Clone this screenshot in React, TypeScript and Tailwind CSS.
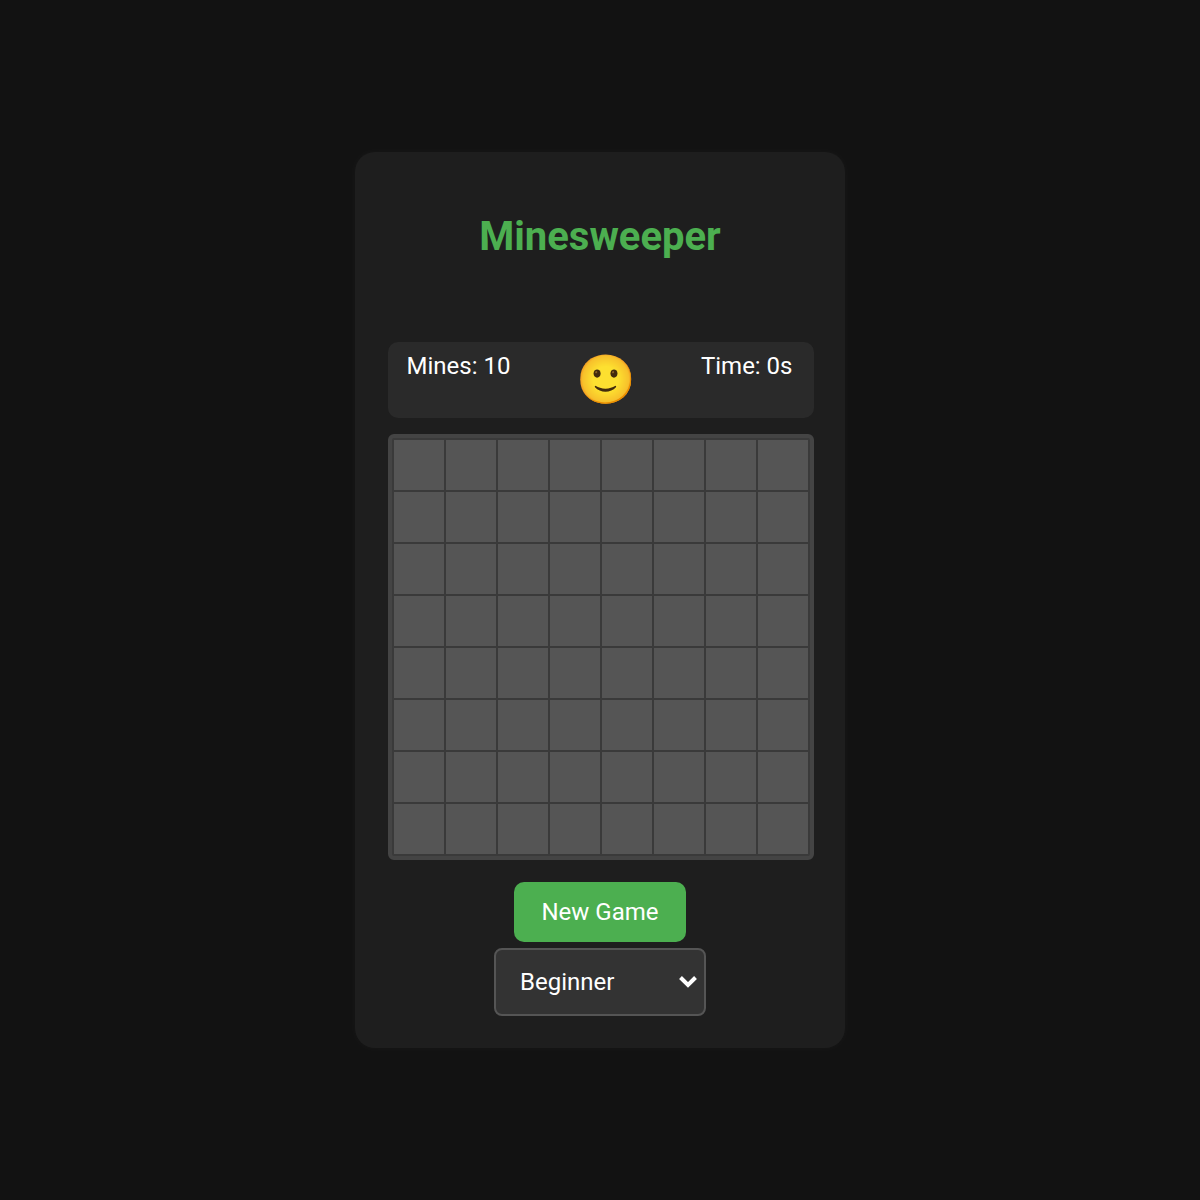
import React from "react";

const cells = Array.from({ length: 64 });

export default function App() {
  return (
    <div className="min-h-[1200px] bg-[#121212] flex items-center justify-center font-['Roboto',sans-serif] text-white">
      <div className="w-[490px] h-[896px] bg-[#1e1e1e] rounded-[20px] shadow-[0_0_10px_rgba(255,255,255,0.03)] px-[32px] pt-[32px] flex flex-col items-center">
        <h1 className="mt-[29px] text-[40px] leading-[47px] font-bold text-[#4caf50]">Minesweeper</h1>
        <div className="mt-[82px] ml-[1px] w-[426px] h-[76px] bg-[#2a2a2a] rounded-[10px] pl-[19px] pr-[21px] pt-[9px] flex justify-between items-start text-[24px] leading-[30px]">
          <span>Mines: 10</span>
          <span className="text-[48px] leading-[56px] mt-[1px] ml-[2px] font-['Noto_Color_Emoji','Roboto',sans-serif]">🙂</span>
          <span>Time: 0s</span>
        </div>
        <div className="mt-[16px] ml-[1px] w-[426px] h-[426px] bg-[#3a3a3a] border-[4px] border-[#444444] rounded-[6px] grid grid-cols-8 gap-[2px] p-[2px]">
          {cells.map((_, i) => (
            <div key={i} className="bg-[#555555]" />
          ))}
        </div>
        <button className="mt-[22px] w-[172px] h-[60px] bg-[#4caf50] rounded-[10px] text-[24px]">New Game</button>
        <div className="mt-[6px] relative w-[212px] h-[68px] bg-[#333333] border-2 border-[#555555] rounded-[8px] text-[24px] pl-[24px] flex items-center">
          Beginner
          <svg className="absolute right-[6px] top-[24px]" width="20" height="16" viewBox="0 0 20 16" fill="none">
            <path d="M2.5 3.5l7.5 7.5 7.5-7.5" stroke="#fff" strokeWidth="4" />
          </svg>
        </div>
      </div>
    </div>
  );
}
